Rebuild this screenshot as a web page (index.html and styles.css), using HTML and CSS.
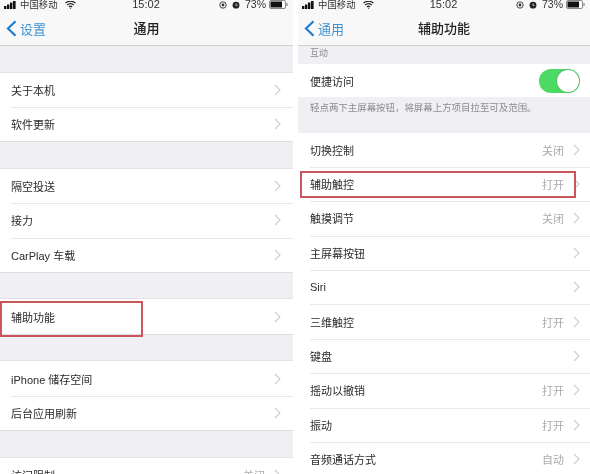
FILE: index.html
```html
<!DOCTYPE html>
<html>
<head>
    <meta charset="UTF-8">
    <title>通用 / 辅助功能</title>
    <link rel="stylesheet" href="styles.css">
</head>
<body>

<svg class="defs" width="0" height="0">
    <symbol id="chev" viewBox="0 0 7 12"><path d="M1 1l5 5-5 5" fill="none" stroke="#cfcfd3" stroke-width="1.2"/></symbol>
    <symbol id="back" viewBox="0 0 11 17"><path d="M9.5 1.2L2 8.5l7.5 7.3" fill="none" stroke="#1b7cd0" stroke-width="2.2"/></symbol>
    <symbol id="signal" viewBox="0 0 12 8"><path d="M0 5h2.4v3H0zM3 3.5h2.4V8H3zM6 1.5h2.4V8H6zM9 0h2.6v8H9z" fill="#111"/></symbol>
    <symbol id="wifi" viewBox="0 0 11 8"><path d="M.5 2.2a7 7 0 0 1 10 0M2.2 4a4.6 4.6 0 0 1 6.6 0M3.9 5.8a2.2 2.2 0 0 1 3.2 0" fill="none" stroke="#222" stroke-width="1.1"/><path d="M5.5 8L4.5 6.8h2z" fill="#222"/></symbol>
    <symbol id="lock" viewBox="0 0 8 8"><circle cx="4" cy="4" r="3.2" fill="none" stroke="#333" stroke-width=".9"/><circle cx="4" cy="4" r="1.4" fill="#333"/></symbol>
    <symbol id="alarm" viewBox="0 0 8 8"><circle cx="4" cy="4.2" r="3.4" fill="#222"/><path d="M4 2.4v2h1.5" fill="none" stroke="#fff" stroke-width=".7"/></symbol>
    <symbol id="battery" viewBox="0 0 19 9"><rect x=".5" y=".5" width="16" height="8" rx="1.5" fill="#fff" stroke="#888"/><rect x="1.5" y="1.5" width="11.5" height="6" fill="#111"/><rect x="17.4" y="3" width="1.2" height="3" fill="#888"/></symbol>
</svg>

<div class="phone phone-left">
    <div class="topbar">
        <div class="status">
            <div class="status-l">
                <svg class="ic-signal"><use href="#signal"/></svg>
                <span>中国移动</span>
                <svg class="ic-wifi"><use href="#wifi"/></svg>
            </div>
            <div class="status-time">15:02</div>
            <div class="status-r">
                <svg class="ic-small"><use href="#lock"/></svg>
                <svg class="ic-small"><use href="#alarm"/></svg>
                <span>73%</span>
                <svg class="ic-battery"><use href="#battery"/></svg>
            </div>
        </div>
        <div class="nav">
            <div class="nav-back"><svg class="ic-back"><use href="#back"/></svg><span>设置</span></div>
            <div class="nav-title">通用</div>
        </div>
    </div>

    <div class="group">
        <div class="row"><span class="name">关于本机</span><svg class="chev"><use href="#chev"/></svg></div>
        <div class="row"><span class="name">软件更新</span><svg class="chev"><use href="#chev"/></svg></div>
    </div>
    <div class="group">
        <div class="row"><span class="name">隔空投送</span><svg class="chev"><use href="#chev"/></svg></div>
        <div class="row"><span class="name">接力</span><svg class="chev"><use href="#chev"/></svg></div>
        <div class="row"><span class="name">CarPlay 车载</span><svg class="chev"><use href="#chev"/></svg></div>
    </div>
    <div class="group">
        <div class="row"><span class="name">辅助功能</span><svg class="chev"><use href="#chev"/></svg></div>
    </div>
    <div class="group">
        <div class="row"><span class="name">iPhone 储存空间</span><svg class="chev"><use href="#chev"/></svg></div>
        <div class="row"><span class="name">后台应用刷新</span><svg class="chev"><use href="#chev"/></svg></div>
    </div>
    <div class="group">
        <div class="row"><span class="name">访问限制</span><span class="val">关闭</span><svg class="chev"><use href="#chev"/></svg></div>
    </div>

    <div class="mark mark-left"></div>
</div>

<div class="phone phone-right">
    <div class="topbar">
        <div class="status">
            <div class="status-l">
                <svg class="ic-signal"><use href="#signal"/></svg>
                <span>中国移动</span>
                <svg class="ic-wifi"><use href="#wifi"/></svg>
            </div>
            <div class="status-time">15:02</div>
            <div class="status-r">
                <svg class="ic-small"><use href="#lock"/></svg>
                <svg class="ic-small"><use href="#alarm"/></svg>
                <span>73%</span>
                <svg class="ic-battery"><use href="#battery"/></svg>
            </div>
        </div>
        <div class="nav">
            <div class="nav-back"><svg class="ic-back"><use href="#back"/></svg><span>通用</span></div>
            <div class="nav-title">辅助功能</div>
        </div>
    </div>

    <div class="sec-head">互动</div>
    <div class="group-plain">
        <div class="row row-short"><span class="name">便捷访问</span><div class="toggle"><div class="knob"></div></div></div>
    </div>
    <div class="sec-foot">轻点两下主屏幕按钮，将屏幕上方项目拉至可及范围。</div>
    <div class="group-plain">
        <div class="row"><span class="name">切换控制</span><span class="val">关闭</span><svg class="chev"><use href="#chev"/></svg></div>
        <div class="row"><span class="name">辅助触控</span><span class="val">打开</span><svg class="chev"><use href="#chev"/></svg></div>
        <div class="row"><span class="name">触摸调节</span><span class="val">关闭</span><svg class="chev"><use href="#chev"/></svg></div>
        <div class="row"><span class="name">主屏幕按钮</span><svg class="chev"><use href="#chev"/></svg></div>
        <div class="row"><span class="name">Siri</span><svg class="chev"><use href="#chev"/></svg></div>
        <div class="row"><span class="name">三维触控</span><span class="val">打开</span><svg class="chev"><use href="#chev"/></svg></div>
        <div class="row"><span class="name">键盘</span><svg class="chev"><use href="#chev"/></svg></div>
        <div class="row"><span class="name">摇动以撤销</span><span class="val">打开</span><svg class="chev"><use href="#chev"/></svg></div>
        <div class="row"><span class="name">振动</span><span class="val">打开</span><svg class="chev"><use href="#chev"/></svg></div>
        <div class="row"><span class="name">音频通话方式</span><span class="val">自动</span><svg class="chev"><use href="#chev"/></svg></div>
    </div>

    <div class="mark mark-right"></div>
</div>

</body>
</html>
```

FILE: styles.css
```css
* { margin: 0; padding: 0; box-sizing: border-box; }
html, body { height: 474px; overflow: hidden; }
body { display: flex; justify-content: space-between; background: #fff; font-family: "Liberation Sans", "Noto Sans CJK SC", sans-serif; color: #2b2b2b; }
.defs { position: absolute; }

.phone { height: 474px; overflow: hidden; position: relative; background: #efeff4; filter: blur(0.3px); }
.phone-left { width: 293px; }
.phone-right { width: 292px; }

.topbar { height: 46px; background: #f8f8f9; border-bottom: 1px solid #cfcfd2; }
.status { height: 7px; display: grid; grid-template-columns: 1fr auto 1fr; align-items: center; padding: 0 5px 0 4px; font-size: 9.4px; line-height: 7px; white-space: nowrap; color: #333; }
.status-l { display: flex; align-items: center; gap: 4px; }
.status-time { font-size: 11px; }
.status-r { display: flex; align-items: center; justify-content: flex-end; gap: 3px; font-size: 10.5px; }
.ic-signal { width: 12px; height: 8px; }
.ic-wifi { width: 11px; height: 8px; margin-left: 3px; }
.ic-small { width: 8px; height: 8px; margin-right: 2px; }
.ic-battery { width: 19px; height: 9px; }

.nav { height: 38px; position: relative; display: flex; align-items: center; justify-content: center; }
.nav-back { position: absolute; left: 6px; top: 11px; height: 20px; display: flex; align-items: center; gap: 3px; font-size: 13px; color: #3f93d3; }
.ic-back { width: 11px; height: 17px; }
.nav-title { font-size: 13px; font-weight: 500; margin-top: 3px; color: #222; }

.group { margin-top: 25.5px; background: #fff; border-top: 1px solid #e3e3e6; border-bottom: 1px solid #dedee1; }
.group-plain { background: #fff; }

.row { height: 34.4px; padding: 0 12px 0 11px; display: flex; align-items: center; font-size: 11px; position: relative; background: #fff; }
.row + .row::before { content: ""; position: absolute; left: 11px; right: 0; top: 0; border-top: 1px solid #e9e9eb; }
.name { flex: 1; }
.val { color: #a9a9ad; margin-right: 9px; }
.chev { width: 7px; height: 12px; }

.phone-right .row { padding: 0 10px 0 12px; }
.phone-right .row + .row::before { left: 12px; }
.phone-right .row-short { height: 33px; }
.sec-head { height: 18px; padding-left: 12px; font-size: 9px; line-height: 14px; color: #8b8b90; }
.sec-foot { height: 35.5px; padding: 3.5px 0 0 12px; font-size: 9.45px; line-height: 13px; color: #8b8b90; }

.toggle { width: 41px; height: 24px; border-radius: 12px; background: #4cd964; display: flex; justify-content: flex-end; padding: 1px; }
.knob { width: 22px; height: 22px; border-radius: 50%; background: #fff; box-shadow: 0 0 2px #5b8a68; }

.mark { position: absolute; border: 2px solid #c9565b; }
.mark-left { left: 0; top: 301px; width: 143px; height: 36px; }
.mark-right { left: 2px; top: 171px; width: 276px; height: 27px; }
```
